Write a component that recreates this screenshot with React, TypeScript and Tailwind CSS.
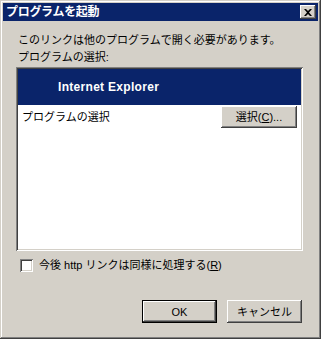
import React from "react";

const raised =
  "shadow-[inset_-1px_-1px_#404040,inset_1px_1px_#ffffff,inset_-2px_-2px_#808080,inset_2px_2px_#d4d0c8]";
const sunken =
  "shadow-[inset_1px_1px_#808080,inset_-1px_-1px_#ffffff,inset_2px_2px_#404040,inset_-2px_-2px_#d4d0c8]";

const jp = "font-['Liberation_Sans','Noto_Sans_CJK_JP',sans-serif]";

export default function App() {
  return (
    <div
      className={`w-[321px] h-[339px] bg-[#d4d0c8] p-[3px] flex flex-col text-black text-[11px] leading-[14px] ${jp} shadow-[inset_-1px_-1px_#404040,inset_1px_1px_#d4d0c8,inset_-2px_-2px_#808080,inset_2px_2px_#ffffff]`}
    >
      {/* Title bar */}
      <div className="h-[18px] bg-[#0a246a] flex items-center justify-between pl-[3px] pr-[2px]">
        <span className="text-white font-bold text-[12px] leading-[14px] tracking-[-0.3px]">プログラムを起動</span>
        <div className={`w-[16px] h-[14px] bg-[#d4d0c8] flex items-center justify-center ${raised}`}>
          <svg width="8" height="7" viewBox="0 0 8 7">
            <path d="M0 0h2l2 2 2-2h2L5 3.5 8 7H6L4 5 2 7H0l3-3.5z" fill="#000" />
          </svg>
        </div>
      </div>

      {/* Content */}
      <div className="flex-1 flex flex-col pl-[13px] pr-[15px]">
        <div className="mt-[12px] ml-[2px]">このリンクは他のプログラムで開く必要があります。</div>
        <div className="mt-[3px] ml-[2px]">プログラムの選択:</div>

        <div className={`mt-[3px] h-[184px] bg-white p-[2px] flex flex-col ${sunken}`}>
          <div className="h-[36px] bg-[#0a246a] flex items-center pl-[40px]">
            <span className="text-white font-bold text-[12px] font-['Liberation_Sans',sans-serif] tracking-[0.3px]">
              Internet Explorer
            </span>
          </div>
          <div className="h-[23px] flex items-center justify-between pl-[4px] pr-[4px]">
            <span>プログラムの選択</span>
            <button className={`w-[76px] h-[22px] bg-[#d4d0c8] flex items-center justify-center ${raised}`}>
              選択(<span className="underline">C</span>)...
            </button>
          </div>
        </div>

        <div className="mt-[7px] flex items-center ml-[4px]">
          <div className={`w-[13px] h-[13px] bg-white ${sunken}`} />
          <span className="ml-[6px]">
            今後 http リンクは同様に処理する(<span className="underline">R</span>)
          </span>
        </div>

        <div className="mt-[28px] flex justify-end gap-[10px] pr-[1px]">
          <div className="w-[75px] h-[23px] border border-black">
            <button className={`w-full h-full bg-[#d4d0c8] flex items-center justify-center ${raised}`}>
              OK
            </button>
          </div>
          <button className={`w-[75px] h-[23px] bg-[#d4d0c8] flex items-center justify-center ${raised}`}>
            キャンセル
          </button>
        </div>
      </div>
    </div>
  );
}
